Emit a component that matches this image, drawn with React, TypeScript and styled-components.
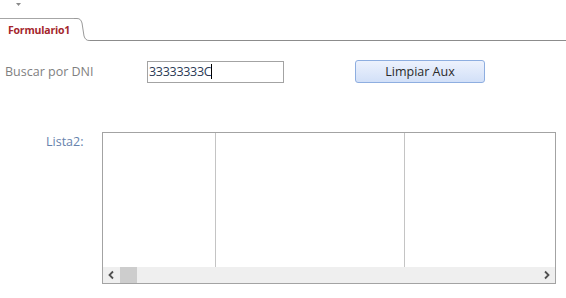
import React from "react";
import styled, { createGlobalStyle } from "styled-components";

const Global = createGlobalStyle`
  html, body { margin: 0; padding: 0; background: #ffffff; }
  body { font-family: "Open Sans", "Noto Sans", sans-serif; }
`;

const Page = styled.div`
  width: 566px;
  height: 298px;
  display: flex;
  flex-direction: column;
  overflow: hidden;
`;

const TopRow = styled.div`
  height: 18px;
  display: flex;
  align-items: flex-start;
  padding-left: 16px;
  box-sizing: border-box;
  padding-top: 3px;
`;

const TabStrip = styled.div`
  height: 23px;
  display: flex;
  align-items: stretch;
`;

const Tab = styled.div`
  border-top: 1px solid #a6a6a6;
  padding: 0 0 0 8px;
  width: 66px;
  display: flex;
  align-items: center;
  font-family: "Open Sans", sans-serif;
  font-weight: 700;
  font-size: 10.5px;
  letter-spacing: -0.2px;
  color: #a4262c;
`;

const TabCurve = styled.svg`
  width: 16px;
  height: 23px;
  flex: none;
  display: block;
`;

const TabLine = styled.div`
  flex: 1;
  border-bottom: 1px solid #8c8c8c;
`;

const Body = styled.div`
  display: flex;
  flex-direction: column;
  padding-top: 19px;
  gap: 49px;
`;

const SearchRow = styled.div`
  display: flex;
  align-items: center;
  padding-left: 5px;
`;

const Label = styled.span<{ $tone?: "gray" | "blue"; $width: number }>`
  width: ${(p) => p.$width}px;
  flex: none;
  font-family: "Open Sans", sans-serif;
  font-size: 12.5px;
  color: ${(p) => (p.$tone === "blue" ? "#6682ad" : "#7f7f7f")};
`;

const TextBox = styled.div`
  width: 137px;
  height: 22px;
  box-sizing: border-box;
  border: 1px solid #a3a3a3;
  display: flex;
  align-items: center;
  padding-left: 1px;
  font-family: "Open Sans", sans-serif;
  font-size: 12.5px;
  letter-spacing: -0.3px;
  color: #2b3a55;
`;

const Caret = styled.span`
  display: inline-block;
  width: 1px;
  height: 15px;
  background: #000;
  margin-left: 0px;
`;

const Button = styled.button`
  margin-left: 71px;
  width: 130px;
  height: 23px;
  border: 1px solid #8eaee0;
  border-radius: 3px;
  background: linear-gradient(#edf2fd, #d2e0f8);
  font-family: "Open Sans", sans-serif;
  font-size: 12.5px;
  color: #2a2a2a;
  padding: 0;
`;

const ListRow = styled.div`
  display: flex;
  align-items: flex-start;
  padding-left: 46px;
`;

const ListLabel = styled(Label)`
  padding-top: 1px;
`;

const ListBox = styled.div`
  width: 454px;
  height: 152px;
  box-sizing: border-box;
  border: 1px solid #a3a3a3;
  display: flex;
  flex-direction: column;
`;

const Columns = styled.div`
  flex: 1;
  display: flex;
`;

const Column = styled.div<{ $width?: number }>`
  ${(p) => (p.$width ? `width: ${p.$width}px; flex: none;` : "flex: 1;")}
  border-right: 1px solid #c4c4c4;
  &:last-child { border-right: none; }
`;

const ScrollBar = styled.div`
  height: 16px;
  background: #efefef;
  display: flex;
  align-items: center;
`;

const Arrow = styled.svg`
  width: 17px;
  height: 16px;
  flex: none;
  display: block;
`;

const Thumb = styled.div`
  width: 17px;
  height: 16px;
  background: #cdcdcd;
  flex: none;
`;

const Track = styled.div`
  flex: 1;
`;

const DropArrow = styled.svg`
  width: 5px;
  height: 3px;
  display: block;
`;

export default function App() {
  return (
    <Page>
      <Global />
      <TopRow>
        <DropArrow viewBox="0 0 5 3">
          <path d="M0 0 H5 L2.5 3 Z" fill="#8a8a8a" />
        </DropArrow>
      </TopRow>
      <TabStrip>
        <Tab>Formulario1</Tab>
        <TabCurve viewBox="0 0 16 23">
          <path
            d="M0 0.5 H3 C6 0.5 7 2 8 5 L10 18 C11 21 12.5 22.5 15 22.5 H16"
            fill="none"
            stroke="#9a9a9a"
            strokeWidth="1"
          />
        </TabCurve>
        <TabLine />
      </TabStrip>
      <Body>
        <SearchRow>
          <Label $width={142}>Buscar por DNI</Label>
          <TextBox>
            33333333C
            <Caret />
          </TextBox>
          <Button>Limpiar Aux</Button>
        </SearchRow>
        <ListRow>
          <ListLabel $tone="blue" $width={56}>
            Lista2:
          </ListLabel>
          <ListBox>
            <Columns>
              <Column $width={112} />
              <Column $width={188} />
              <Column />
            </Columns>
            <ScrollBar>
              <Arrow viewBox="0 0 17 16">
                <path d="M10 4.5 L6.5 8 L10 11.5" fill="none" stroke="#505050" strokeWidth="1.8" />
              </Arrow>
              <Thumb />
              <Track />
              <Arrow viewBox="0 0 17 16">
                <path d="M7 4.5 L10.5 8 L7 11.5" fill="none" stroke="#505050" strokeWidth="1.8" />
              </Arrow>
            </ScrollBar>
          </ListBox>
        </ListRow>
      </Body>
    </Page>
  );
}
